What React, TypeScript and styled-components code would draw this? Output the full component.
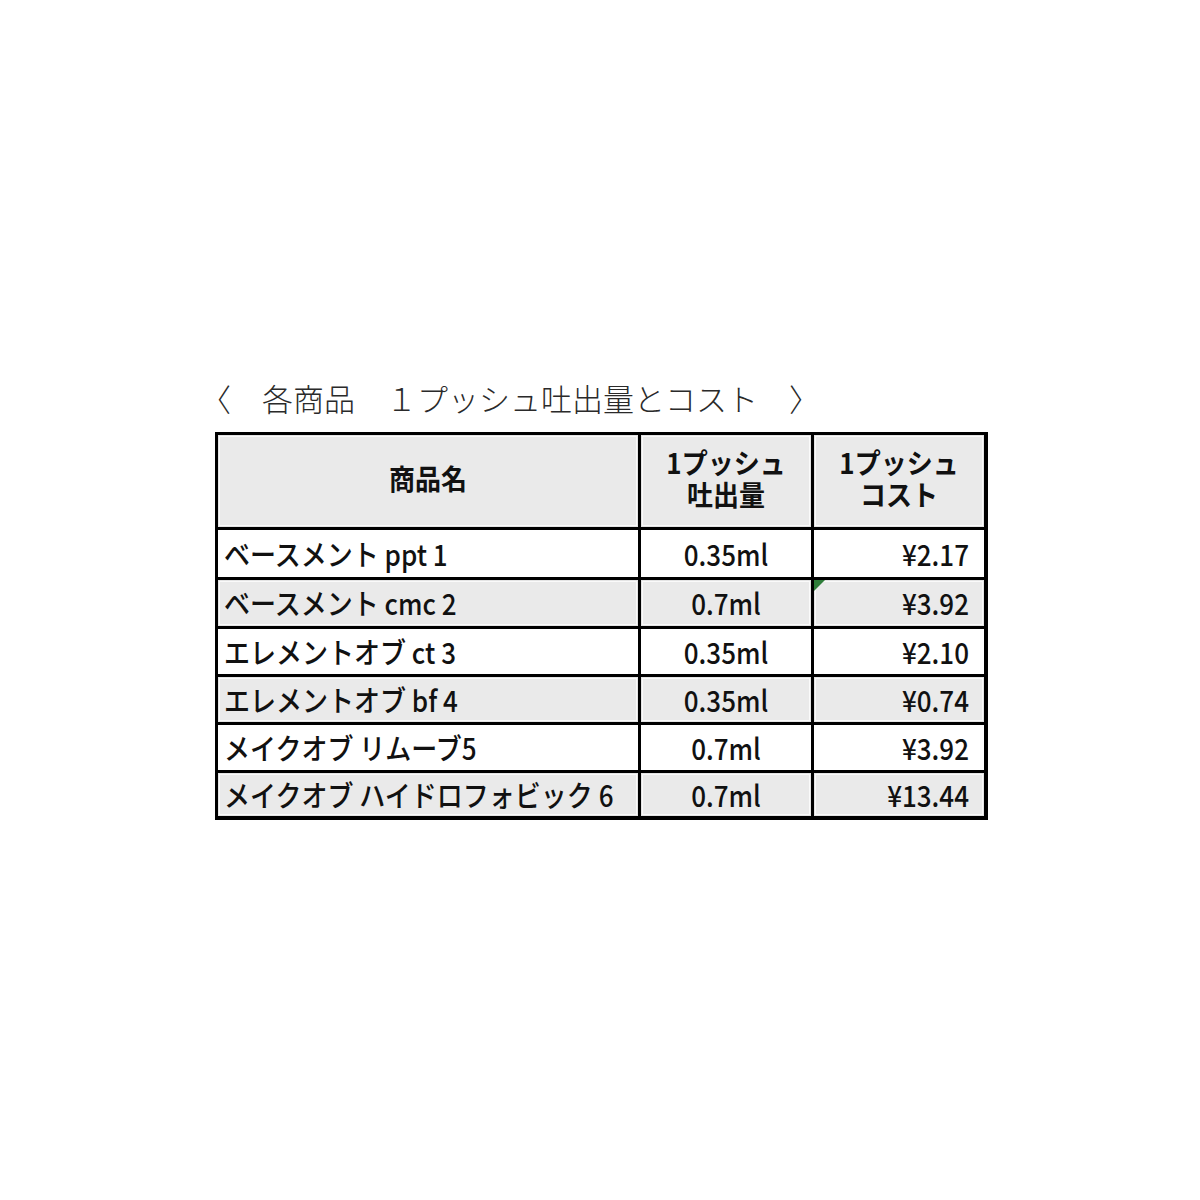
import React from "react";
import styled, { createGlobalStyle } from "styled-components";

const Global = createGlobalStyle`
  html, body { margin: 0; padding: 0; background: #fff; }
  body { font-family: "Noto Sans CJK JP", "Noto Sans", sans-serif; color: #111; }
`;

const Page = styled.div`
  width: 1200px;
  height: 1200px;
  box-sizing: border-box;
  padding: 378px 0 0 200px;
  display: flex;
  flex-direction: column;
  align-items: flex-start;
`;

const Title = styled.div`
  font-family: "Noto Sans CJK JP", sans-serif;
  font-weight: 300;
  font-size: 31px;
  line-height: 40px;
  height: 40px;
  color: #2a2a2a;
  white-space: pre;
`;

const Table = styled.div`
  margin: 14px 0 0 15px;
  display: grid;
  grid-template-columns: 420px 170px 170px;
  grid-template-rows: 92px 47px 46px 45px 45px 45px 43px;
  column-gap: 3px;
  row-gap: 3px;
  background: #000;
  border-style: solid;
  border-color: #000;
  border-width: 3px 4px 4px 3px;
`;

const Cell = styled.div<{ $gray?: boolean; $align?: "left" | "center" | "right"; $head?: boolean }>`
  position: relative;
  box-sizing: border-box;
  background: ${(p) => (p.$gray ? "#eaeaea" : "#fff")};
  box-shadow: ${(p) => (p.$gray ? "inset 0 0 0 1px #e4e4e4, inset 0 0 0 2px #fafafa" : "none")};
  display: flex;
  flex-direction: column;
  justify-content: center;
  align-items: ${(p) => (p.$align === "center" ? "center" : p.$align === "right" ? "flex-end" : "flex-start")};
  padding: ${(p) =>
    p.$head ? "0 0 6px 0" : p.$align === "right" ? "0 15px 0 0" : p.$align === "left" ? "0 0 0 6px" : "0"};
  font-size: 26px;
  font-weight: ${(p) => (p.$head ? 700 : 500)};
  color: #111;
  white-space: nowrap;
`;

const Text = styled.span<{ $head?: boolean }>`
  display: block;
  line-height: ${(p) => (p.$head ? "32px" : "30px")};
  height: ${(p) => (p.$head ? "32px" : "30px")};
  transform: scaleY(${(p) => (p.$head ? 1.08 : 1.12)});
`;

const CommentMark = styled.span`
  position: absolute;
  top: 0;
  left: 0;
  width: 0;
  height: 0;
  border-top: 11px solid #2f7d3a;
  border-right: 11px solid transparent;
`;

const rows = [
  { name: "ベースメント ppt 1", amount: "0.35ml", cost: "¥2.17" },
  { name: "ベースメント cmc 2", amount: "0.7ml", cost: "¥3.92", mark: true },
  { name: "エレメントオブ ct 3", amount: "0.35ml", cost: "¥2.10" },
  { name: "エレメントオブ bf 4", amount: "0.35ml", cost: "¥0.74" },
  { name: "メイクオブ リムーブ5", amount: "0.7ml", cost: "¥3.92" },
  { name: "メイクオブ ハイドロフォビック 6", amount: "0.7ml", cost: "¥13.44" },
];

export default function App() {
  return (
    <>
      <Global />
      <Page>
        <Title>〈　各商品　１プッシュ吐出量とコスト　〉</Title>
        <Table>
          <Cell $gray $head $align="center">
            <Text $head>商品名</Text>
          </Cell>
          <Cell $gray $head $align="center">
            <Text $head>1プッシュ</Text>
            <Text $head>吐出量</Text>
          </Cell>
          <Cell $gray $head $align="center">
            <Text $head>1プッシュ</Text>
            <Text $head>コスト</Text>
          </Cell>
          {rows.map((r, i) => {
            const gray = i % 2 === 1;
            return (
              <React.Fragment key={i}>
                <Cell $gray={gray} $align="left">
                  <Text>{r.name}</Text>
                </Cell>
                <Cell $gray={gray} $align="center">
                  <Text>{r.amount}</Text>
                </Cell>
                <Cell $gray={gray} $align="right">
                  {r.mark && <CommentMark />}
                  <Text>{r.cost}</Text>
                </Cell>
              </React.Fragment>
            );
          })}
        </Table>
      </Page>
    </>
  );
}
